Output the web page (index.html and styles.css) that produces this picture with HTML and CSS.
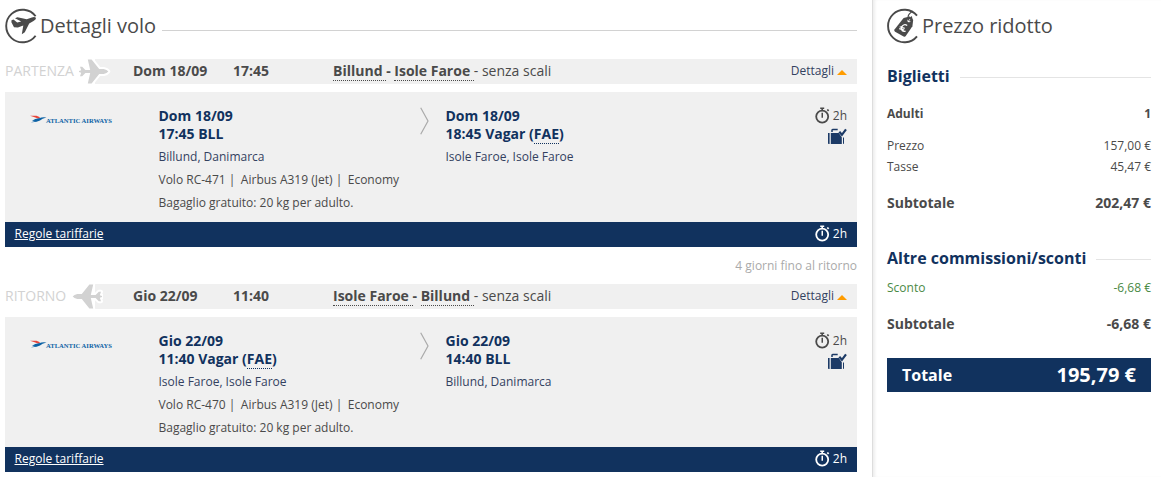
FILE: index.html
```
<!DOCTYPE html>
<html lang="it">
<head>
    <meta charset="utf-8">
    <title>Dettagli volo</title>
    <link rel="stylesheet" href="styles.css">
</head>
<body>
    <svg width="0" height="0" class="symbols">
        <symbol id="watch" viewBox="0 0 16 17">
            <circle cx="7.2" cy="9.6" r="6" fill="none" stroke="currentColor" stroke-width="1.8"/>
            <path d="M5.2 0.5h4v1.6H8v1.6H6.4V2.1H5.2zM11.7 3l1.2-1.1 1.4 1.3-1.3 1.3zM6.5 5.8h1.5v5H6.5z" fill="currentColor"/>
        </symbol>
        <symbol id="bag" viewBox="0 0 20 17">
            <path d="M1 5h1.6v11H1.7Q1 16 1 15.2zM3.8 5h8l3 4.2v6.8h-11zM16 10l1-1v6.2q0 .8-.9.8H16z" fill="#1c3a66"/>
            <path d="M5 4V2.2q0-.7.7-.7h5" fill="none" stroke="#1c3a66" stroke-width="1.5"/>
            <path d="M12.3 3.8l2.6 3L19 1.4" fill="none" stroke="#1c3a66" stroke-width="2.2"/>
        </symbol>
        <symbol id="plane" viewBox="0 0 34 25">
            <path d="M2 7.8h2.2l3.2 3.2h4.8L9.8.5h3.8l7.6 9.5h4.5q3.3.7 4.6 2.5-1.3 1.8-4.6 2.5h-4.5l-7.6 9.5H9.8L12.2 14H7.4l-3.2 3.2H2l1.2-3.4-2.2-.8v-1l2.2-.8z" fill="#d2d2d2" stroke="#fff" stroke-width="4" paint-order="stroke" stroke-linejoin="round"/>
        </symbol>
    </svg>

    <div class="page">
        <div class="flights">
            <div class="title">
                <svg class="title-icon" viewBox="0 0 35 36">
                    <path d="M30.6 8.3A16.3 16.3 0 1 0 30.6 27.7" fill="none" stroke="#4a4a4a" stroke-width="1.9"/>
                    <path d="M6.5 12.2l2-.6 3.7 2.8 4-.9-6.2-3.3 2.5-.9 9.2 1.9 5.2-1.8q3-.9 4.1.5.2 1.4-2.5 3l-4.3 2.7-4.4 8.7-3 1.9 1.5-8.7-5.4 2-3.9-.2-2.6-5.1z" fill="#4a4a4a"/>
                </svg>
                <h1>Dettagli volo</h1>
                <span class="line"></span>
            </div>

            <div class="leg-bar">
                <span class="direction outbound">PARTENZA</span>
                <svg class="plane"><use href="#plane"/></svg>
                <b class="date">Dom 18/09</b>
                <b class="time">17:45</b>
                <span class="route"><b><u>Billund </u>- <u>Isole Faroe </u></b>- senza scali</span>
                <span class="details">Dettagli <i class="arrow"></i></span>
            </div>
            <div class="leg">
                <div class="airline">
                    <svg class="bird" viewBox="0 0 17 10">
                        <path d="M0 .7h6.5L10 2.2 8.5 3.8Q5 2.2 0 .7z" fill="#e8463a"/>
                        <path d="M2 5.7Q5 3.6 9 3.2q4-1.5 7.5-.6Q12 3.8 10 5.5 7 7.4 1 7.2l4-1.1z" fill="#0c62a5"/>
                    </svg>
                    <span>ATLANTIC AIRWAYS</span>
                </div>
                <div class="from">
                    <b>Dom 18/09<br>17:45 BLL</b>
                    <p class="city">Billund, Danimarca</p>
                    <p class="info"><span>Volo RC-471 |</span><span>Airbus A319 (Jet) |</span><span>Economy</span></p>
                    <p>Bagaglio gratuito: 20 kg per adulto.</p>
                </div>
                <svg class="chevron" viewBox="0 0 9 28"><path d="M.7.7L8 14 .7 27.3"/></svg>
                <div class="to">
                    <b>Dom 18/09<br>18:45 Vagar (<u>FAE</u>)</b>
                    <p class="city">Isole Faroe, Isole Faroe</p>
                </div>
                <div class="extra">
                    <span class="duration"><svg class="watch"><use href="#watch"/></svg>2h</span>
                    <svg class="bag"><use href="#bag"/></svg>
                </div>
            </div>
            <div class="leg-footer">
                <a href="#">Regole tariffarie</a>
                <span class="duration"><svg class="watch"><use href="#watch"/></svg>2h</span>
            </div>

            <p class="stay">4 giorni fino al ritorno</p>

            <div class="leg-bar">
                <span class="direction inbound">RITORNO</span>
                <svg class="plane back"><use href="#plane"/></svg>
                <b class="date">Gio 22/09</b>
                <b class="time">11:40</b>
                <span class="route"><b><u>Isole Faroe </u>- <u>Billund </u></b>- senza scali</span>
                <span class="details">Dettagli <i class="arrow"></i></span>
            </div>
            <div class="leg">
                <div class="airline">
                    <svg class="bird" viewBox="0 0 17 10">
                        <path d="M0 .7h6.5L10 2.2 8.5 3.8Q5 2.2 0 .7z" fill="#e8463a"/>
                        <path d="M2 5.7Q5 3.6 9 3.2q4-1.5 7.5-.6Q12 3.8 10 5.5 7 7.4 1 7.2l4-1.1z" fill="#0c62a5"/>
                    </svg>
                    <span>ATLANTIC AIRWAYS</span>
                </div>
                <div class="from">
                    <b>Gio 22/09<br>11:40 Vagar (<u>FAE</u>)</b>
                    <p class="city">Isole Faroe, Isole Faroe</p>
                    <p class="info"><span>Volo RC-470 |</span><span>Airbus A319 (Jet) |</span><span>Economy</span></p>
                    <p>Bagaglio gratuito: 20 kg per adulto.</p>
                </div>
                <svg class="chevron" viewBox="0 0 9 28"><path d="M.7.7L8 14 .7 27.3"/></svg>
                <div class="to">
                    <b>Gio 22/09<br>14:40 BLL</b>
                    <p class="city">Billund, Danimarca</p>
                </div>
                <div class="extra">
                    <span class="duration"><svg class="watch"><use href="#watch"/></svg>2h</span>
                    <svg class="bag"><use href="#bag"/></svg>
                </div>
            </div>
            <div class="leg-footer">
                <a href="#">Regole tariffarie</a>
                <span class="duration"><svg class="watch"><use href="#watch"/></svg>2h</span>
            </div>
        </div>

        <div class="price">
            <div class="title">
                <svg class="title-icon" viewBox="0 0 35 36">
                    <path d="M30 7.7A16.3 16.3 0 1 0 30 28.3" fill="none" stroke="#4a4a4a" stroke-width="1.9"/>
                    <path d="M16.6 10l6-1.5q2.8.8 3.6 3.6l-.8 6.2-6.6 9.6q-.9 1.2-2.2.5l-8.5-4.6q-1.4-.9-.6-2.3z" fill="#4a4a4a"/>
                    <circle cx="22" cy="12.7" r="1.6" fill="#fff"/>
                    <path d="M22 12.5q-2-4 .4-6.6t3.2-2.6M22.4 13q3-.7 2-4.6" fill="none" stroke="#4a4a4a" stroke-width="1.2"/>
                    <path d="M20.2 17.4q-2.6-1.9-4.8.5-2 2.7-.2 4.8 1.7 1.2 3.4.2M12.7 18.8l5 1.6M12.2 20.6l5 1.5" fill="none" stroke="#fff" stroke-width="1.2"/>
                </svg>
                <h1>Prezzo ridotto</h1>
            </div>

            <div class="section first"><h2>Biglietti</h2><span class="line"></span></div>
            <div class="row adults"><b>Adulti</b><b>1</b></div>
            <div class="row"><span>Prezzo</span><span>157,00 €</span></div>
            <div class="row"><span>Tasse</span><span>45,47 €</span></div>
            <div class="row subtotal"><b>Subtotale</b><b>202,47 €</b></div>

            <div class="section second"><h2>Altre commissioni/sconti</h2><span class="line"></span></div>
            <div class="row discount"><span>Sconto</span><span>-6,68 €</span></div>
            <div class="row subtotal"><b>Subtotale</b><b>-6,68 €</b></div>

            <div class="total"><span>Totale</span><strong>195,79 €</strong></div>
        </div>
    </div>
</body>
</html>
```
FILE: styles.css
```
* {
    box-sizing: border-box;
}

body {
    margin: 0;
    font-family: "Open Sans", sans-serif;
    font-size: 12px;
    color: #4a4a4a;
    background: #fff;
}

h1, h2, p {
    margin: 0;
}

b {
    font-weight: 700;
}

u {
    text-decoration: none;
    border-bottom: 1px dotted currentColor;
    white-space: pre;
}

svg {
    display: block;
    flex: none;
}

.symbols {
    position: absolute;
}

.page {
    display: flex;
    height: 477px;
    overflow: hidden;
}

.flights {
    width: 872px;
    padding: 0 15px 0 5px;
}

.title {
    display: flex;
    align-items: center;
    height: 51px;
}

.title-icon {
    width: 35px;
    height: 36px;
}

h1 {
    font-size: 20px;
    font-weight: 400;
    line-height: 28px;
    letter-spacing: -0.03px;
}

.line {
    flex: 1;
    height: 1px;
    background: #d2d2d2;
}

.flights .line {
    margin: 9px 0 0 6px;
}

.leg-bar {
    display: flex;
    align-items: center;
    height: 25px;
    margin-top: 8px;
    font-size: 14px;
    line-height: 25px;
    background: linear-gradient(90deg, #fff 90px, #f0f0f0 90px);
}

.leg-bar > b, .leg-bar > span {
    height: 27px;
}

.direction {
    color: #d2d2d2;
}

.outbound {
    width: 73px;
}

.inbound {
    width: 64px;
}

.plane {
    width: 34px;
    height: 25px;
}

.back {
    transform: scaleX(-1);
    margin-right: 9px;
}

.date {
    width: 100px;
    margin-left: 21px;
}

.time {
    width: 100px;
}

.route {
    flex: 1;
}

.details {
    display: flex;
    margin-right: 10px;
    font-size: 12px;
    color: #33415f;
}

.arrow {
    height: 5px;
    margin: 12px 0 0 3px;
    border: 5px solid transparent;
    border-top: 0;
    border-bottom: 5px solid #ff9c00;
}

.leg {
    display: flex;
    height: 130px;
    margin-top: 8px;
    padding: 15px 10px 0 25px;
    background: #f0f0f0;
}

.airline {
    display: flex;
    width: 82px;
    height: 10px;
    margin: 8px 46.5px 0 0;
    font: bold 6.6px/11px "Liberation Serif", serif;
    white-space: nowrap;
    color: #0c62a5;
}

.bird {
    width: 17px;
    height: 10px;
    margin-right: -1px;
}

.from {
    width: 261px;
}

.from b, .to b {
    display: block;
    margin-bottom: 2px;
    font-size: 14px;
    line-height: 18px;
    color: #11325e;
}

.leg p {
    line-height: 23px;
}

.leg .city {
    color: #33415f;
}

.info {
    display: flex;
    gap: 5.5px;
}

.chevron {
    width: 9px;
    height: 28px;
    margin-right: 17px;
}

.chevron path {
    fill: none;
    stroke: #aaa;
    stroke-width: 1.2;
}

.to {
    flex: 1;
}

.extra {
    display: flex;
    flex-direction: column;
    align-items: flex-end;
    margin-top: -1px;
}

.duration {
    display: flex;
    align-items: center;
    gap: 2px;
    height: 18px;
}

.watch {
    width: 16px;
    height: 17px;
}

.bag {
    width: 20px;
    height: 17px;
    margin-top: 4px;
}

.leg-footer {
    display: flex;
    align-items: center;
    justify-content: space-between;
    height: 25px;
    padding: 0 10px 2px 9.5px;
    color: #fff;
    background: #11325e;
}

.leg-footer a {
    color: #fff;
}

.stay {
    height: 29px;
    padding-top: 8px;
    line-height: 22px;
    text-align: right;
    color: #aaa;
}

.price {
    flex: 1;
    padding: 0 10px 0 14px;
    border-left: 1px solid #ddd;
    box-shadow: inset 3px 0 3px -1px #eee;
}

.section {
    display: flex;
    align-items: center;
    gap: 10px;
}

.first {
    margin-top: 14px;
}

.second {
    margin-top: 34px;
}

h2 {
    font-size: 16px;
    font-weight: 700;
    line-height: 22px;
    color: #11325e;
}

.section .line {
    margin-top: 2px;
    background: #e4e4e4;
}

.row {
    display: flex;
    justify-content: space-between;
    line-height: 21px;
}

.adults {
    margin: 16px 0 11px;
}

.subtotal {
    margin-top: 15px;
    font-size: 14px;
}

.discount {
    margin-top: 8px;
    color: #4b8a45;
}

.total {
    display: flex;
    align-items: center;
    justify-content: space-between;
    height: 34px;
    margin-top: 24px;
    padding: 0 15px;
    font-size: 16px;
    font-weight: 700;
    color: #fff;
    background: #11325e;
}

.total strong {
    margin-top: -2px;
    font-size: 20px;
    font-weight: 700;
}
```
